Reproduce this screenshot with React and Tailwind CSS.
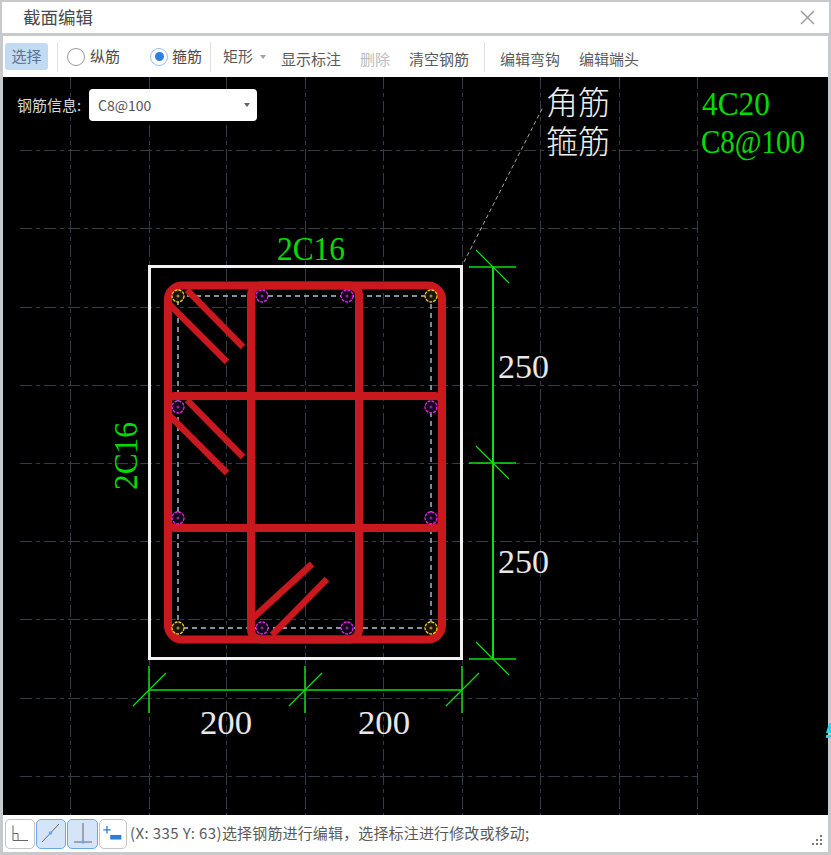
// App.jsx - section editor dialog
const gridX = [70, 149, 226, 305, 383, 462, 540, 619, 697];
const gridY = [150, 228, 307, 385, 463, 541, 619, 698, 776];

const RED = "#c9191f";
const GREEN = "#00dc00";
const DIM = "#10dc10";

// stirrup hooks, x1 y1 x2 y2
const hooks = [
  [168, 303, 227, 362],
  [187, 290, 243, 347],
  [170, 416, 227, 473],
  [187, 400, 243, 457],
  [253, 618, 312, 564],
  [272, 635, 327, 579],
];

const cornerBars = [
  [178, 296],
  [431, 296],
  [178, 628],
  [431, 628],
];
const sideBars = [
  [262, 296],
  [347, 296],
  [178, 407],
  [431, 407],
  [178, 518],
  [431, 518],
  [262, 628],
  [347, 628],
];

// dimension ticks: x, y of each node
const vTicks = [267, 463, 659];
const hTicks = [149, 305, 462];

function CadText({ x, y, len, fill, size = 33, rotate, children }) {
  return (
    <text
      x={x}
      y={y}
      fill={fill}
      fontSize={size}
      fontFamily="'Liberation Serif', serif"
      textLength={len}
      lengthAdjust="spacingAndGlyphs"
      transform={rotate ? `rotate(${rotate} ${x} ${y})` : undefined}
    >
      {children}
    </text>
  );
}

function Canvas() {
  return (
    <svg
      className="absolute inset-0 block overflow-visible"
      width="825"
      height="738"
      viewBox="3 77 825 738"
    >
      {/* grid */}
      {gridX.map((x) => (
        <line key={x} x1={x + 0.5} y1="77" x2={x + 0.5} y2="815" stroke="#343c48" strokeWidth="1" strokeDasharray="12 4 4 4" />
      ))}
      {gridY.map((y) => (
        <line key={y} x1="20" y1={y + 0.5} x2="697" y2={y + 0.5} stroke="#343c48" strokeWidth="1" strokeDasharray="12 4 4 4" />
      ))}

      {/* leader */}
      <line x1="464" y1="262" x2="543" y2="107" stroke="#a8a8a8" strokeWidth="1" strokeDasharray="4 3" />

      {/* section outline */}
      <rect x="149.5" y="266.5" width="312" height="392" fill="none" stroke="#f2f2f2" strokeWidth="3" />

      {/* inner dashed */}
      <rect x="178" y="296" width="253" height="332" fill="none" stroke="#a9c4dc" strokeWidth="1.4" strokeDasharray="5 4" />

      {/* stirrups */}
      <g fill="none" stroke={RED} strokeWidth="8">
        <rect x="168" y="285.5" width="274" height="354" rx="14" />
        <rect x="251" y="285.5" width="108" height="354" rx="10" />
        <rect x="168" y="396" width="274" height="132" rx="6" />
        {hooks.map(([x1, y1, x2, y2]) => (
          <line key={x1 + "-" + y1} x1={x1} y1={y1} x2={x2} y2={y2} strokeWidth="6.5" />
        ))}
      </g>

      {/* rebars */}
      {cornerBars.map(([x, y]) => (
        <g key={x + "-" + y}>
          <circle cx={x} cy={y} r="6" fill="#1a1405" stroke="#f0cc20" strokeWidth="1.3" strokeDasharray="3 1" />
          <circle cx={x} cy={y} r="1.5" fill="#9a8a50" />
        </g>
      ))}
      {sideBars.map(([x, y]) => (
        <g key={x + "-" + y}>
          <circle cx={x} cy={y} r="6" fill="#14051c" stroke="#e624f0" strokeWidth="1.3" strokeDasharray="3 1" />
          <circle cx={x} cy={y} r="1.5" fill="#7a3088" />
        </g>
      ))}

      {/* right dimension */}
      <g stroke={DIM} strokeWidth="1.5">
        <line x1="493" y1="267" x2="493" y2="659" strokeWidth="2" />
        {vTicks.map((y) => (
          <g key={y}>
            <line x1="469" y1={y} x2="516" y2={y} />
            <line x1="476" y1={y - 17} x2="509" y2={y + 16} strokeWidth="1.2" />
          </g>
        ))}
        {/* bottom dimension */}
        <line x1="149" y1="690" x2="462" y2="690" />
        {hTicks.map((x) => (
          <g key={x}>
            <line x1={x} y1="666" x2={x} y2="713" />
            <line x1={x - 16} y1="706" x2={x + 17} y2="673" strokeWidth="1.2" />
          </g>
        ))}
      </g>

      {/* labels */}
      <CadText x="277" y="260" len="68" fill={GREEN}>2C16</CadText>
      <CadText x="137" y="490" len="68" fill={GREEN} rotate="-90">2C16</CadText>
      <CadText x="702" y="115" len="68" fill={GREEN}>4C20</CadText>
      <CadText x="701" y="153" len="104" fill={GREEN}>C8@100</CadText>
      <CadText x="498" y="378" len="51" fill="#e8e8e8">250</CadText>
      <CadText x="498" y="573" len="51" fill="#e8e8e8">250</CadText>
      <CadText x="200" y="734" len="52" fill="#e8e8e8">200</CadText>
      <CadText x="358" y="734" len="52" fill="#e8e8e8">200</CadText>

      <text x="546" y="114" fill="#f0f0f0" fontSize="32" fontWeight="300" fontFamily="'Noto Sans CJK SC', sans-serif">角筋</text>
      <text x="546" y="153" fill="#f0f0f0" fontSize="32" fontWeight="300" fontFamily="'Noto Sans CJK SC', sans-serif">箍筋</text>

      {/* clipped glyph at the right edge */}
      <path d="M826 733 L829 723 H831 V733 Z M826 735 H831 V738 H826 Z" fill="#29d5e8" />
    </svg>
  );
}

function Radio({ checked, label, className }) {
  return (
    <div className={"flex items-center " + className}>
      <span
        className={
          "flex h-[18px] w-[18px] items-center justify-center rounded-full border bg-white " +
          (checked ? "border-[#9dbfe8]" : "border-[#9a9a9a]")
        }
      >
        {checked && <span className="h-[9px] w-[9px] rounded-full bg-[#2f7fe0]" />}
      </span>
      <span className={"text-[15px] text-[#4a4a4a] " + (checked ? "ml-[4px]" : "ml-[5px]")}>{label}</span>
    </div>
  );
}

function ToolText({ children, disabled, className }) {
  return (
    <span className={"pt-[5px] text-[15px] " + (disabled ? "text-[#bdbdbd] " : "text-[#5a5a5a] ") + className}>
      {children}
    </span>
  );
}

function Divider({ className }) {
  return <span className={"h-[30px] w-px bg-[#e2e2e2] " + className} />;
}

function SnapButton({ active, className, children }) {
  return (
    <button
      className={
        "flex h-[30px] items-center justify-center rounded-[5px] border " +
        (active ? "border-[#6aa8ee] bg-[#d6e4f7] " : "border-[#c4c4c4] bg-white ") +
        className
      }
    >
      <svg width="28" height="28" viewBox="0 0 28 28" fill="none">
        {children}
      </svg>
    </button>
  );
}

export default function App() {
  return (
    <div className="flex h-[855px] w-[831px] flex-col bg-[#c8c9cc] pb-[3px] pl-[2px] pr-[2px] pt-[2px] font-['Noto_Sans_CJK_SC','Noto_Sans',sans-serif]">
      {/* title bar */}
      <div className="flex h-[31px] shrink-0 items-center justify-between bg-white pl-[21px] pr-[14px]">
        <span className="text-[17.5px] text-[#4a4a4a]">截面编辑</span>
        <svg width="15" height="15" viewBox="0 0 15 15" stroke="#9a9a9a" strokeWidth="1.4">
          <line x1="1" y1="1" x2="14" y2="14" />
          <line x1="14" y1="1" x2="1" y2="14" />
        </svg>
      </div>

      <div className="ml-px mr-px mt-[3px] flex min-h-0 flex-1 flex-col">
        {/* toolbar */}
        <div className="flex h-[41px] shrink-0 items-center bg-white">
          <button className="ml-[2px] h-[27px] w-[43px] rounded-[3px] bg-[#c3daf3] text-[15px] text-[#5a7390]">选择</button>
          <Divider className="ml-[9px]" />
          <Radio label="纵筋" className="ml-[9px]" />
          <Radio checked label="箍筋" className="ml-[30px]" />
          <Divider className="ml-[8px]" />
          <div className="ml-[12px] flex items-center">
            <span className="text-[15px] text-[#5a5a5a]">矩形</span>
            <span className="ml-[7px] h-0 w-0 border-x-[3px] border-t-[4px] border-x-transparent border-t-[#a0a0a0]" />
          </div>
          <ToolText className="ml-[15px]">显示标注</ToolText>
          <ToolText disabled className="ml-[19px]">删除</ToolText>
          <ToolText className="ml-[19px]">清空钢筋</ToolText>
          <Divider className="ml-[15px]" />
          <ToolText className="ml-[15px]">编辑弯钩</ToolText>
          <ToolText className="ml-[19px]">编辑端头</ToolText>
        </div>

        {/* drawing */}
        <div className="relative z-10 h-[738px] shrink-0 bg-black">
          <Canvas />
          <div className="absolute left-[14px] top-[12px] flex items-center">
            <span className="w-[65px] whitespace-nowrap text-[15px] text-[#d8d8d8]">钢筋信息:</span>
            <div className="ml-[7px] flex h-[32px] w-[168px] items-center justify-between rounded-[4px] bg-white pl-[9px] pr-[7px]">
              <span className="text-[14px] text-[#555555]">C8@100</span>
              <span className="h-0 w-0 border-x-[3px] border-t-[4px] border-x-transparent border-t-[#666666]" />
            </div>
          </div>
        </div>

        {/* status bar */}
        <div className="flex min-h-0 flex-1 items-center bg-white pl-[2px] pr-[5px]">
          <div className="flex items-center gap-px">
            <SnapButton className="w-[30px]">
              <path d="M7 5.5V20.5H22M7 13.5H12V20.5" stroke="#666666" />
            </SnapButton>
            <SnapButton active className="w-[30px]">
              <line x1="5" y1="22" x2="22" y2="4" stroke="#666666" />
              <circle cx="13.5" cy="13" r="1.8" fill="#6aa8ee" />
            </SnapButton>
            <SnapButton active className="w-[31px]">
              <path d="M14 3V22M5 22H23" stroke="#666666" />
              <circle cx="14" cy="22" r="1.8" fill="#6aa8ee" />
            </SnapButton>
            <SnapButton className="w-[28px]">
              <path d="M3.5 9.5H11.5M7.5 5.5V13.5" stroke="#2b7ed8" strokeWidth="1.4" />
              <rect x="11" y="15" width="12" height="5" fill="#2b7ed8" />
            </SnapButton>
          </div>
          <span className="ml-[3px] whitespace-nowrap text-[15px] text-[#5a5a5a]">
            <span className="tracking-[0.4px]">(X: 335 Y: 63)</span>
            <span className="tracking-[0.15px]">选择钢筋进行编辑，选择标注进行修改或移动;</span>
          </span>
          <svg className="ml-auto mt-[13px]" width="11" height="11" viewBox="0 0 11 11" fill="#777777">
            <rect x="8" y="0" width="2" height="2" />
            <rect x="4" y="4" width="2" height="2" />
            <rect x="8" y="4" width="2" height="2" />
            <rect x="0" y="8" width="2" height="2" />
            <rect x="4" y="8" width="2" height="2" />
            <rect x="8" y="8" width="2" height="2" />
          </svg>
        </div>
      </div>
    </div>
  );
}
